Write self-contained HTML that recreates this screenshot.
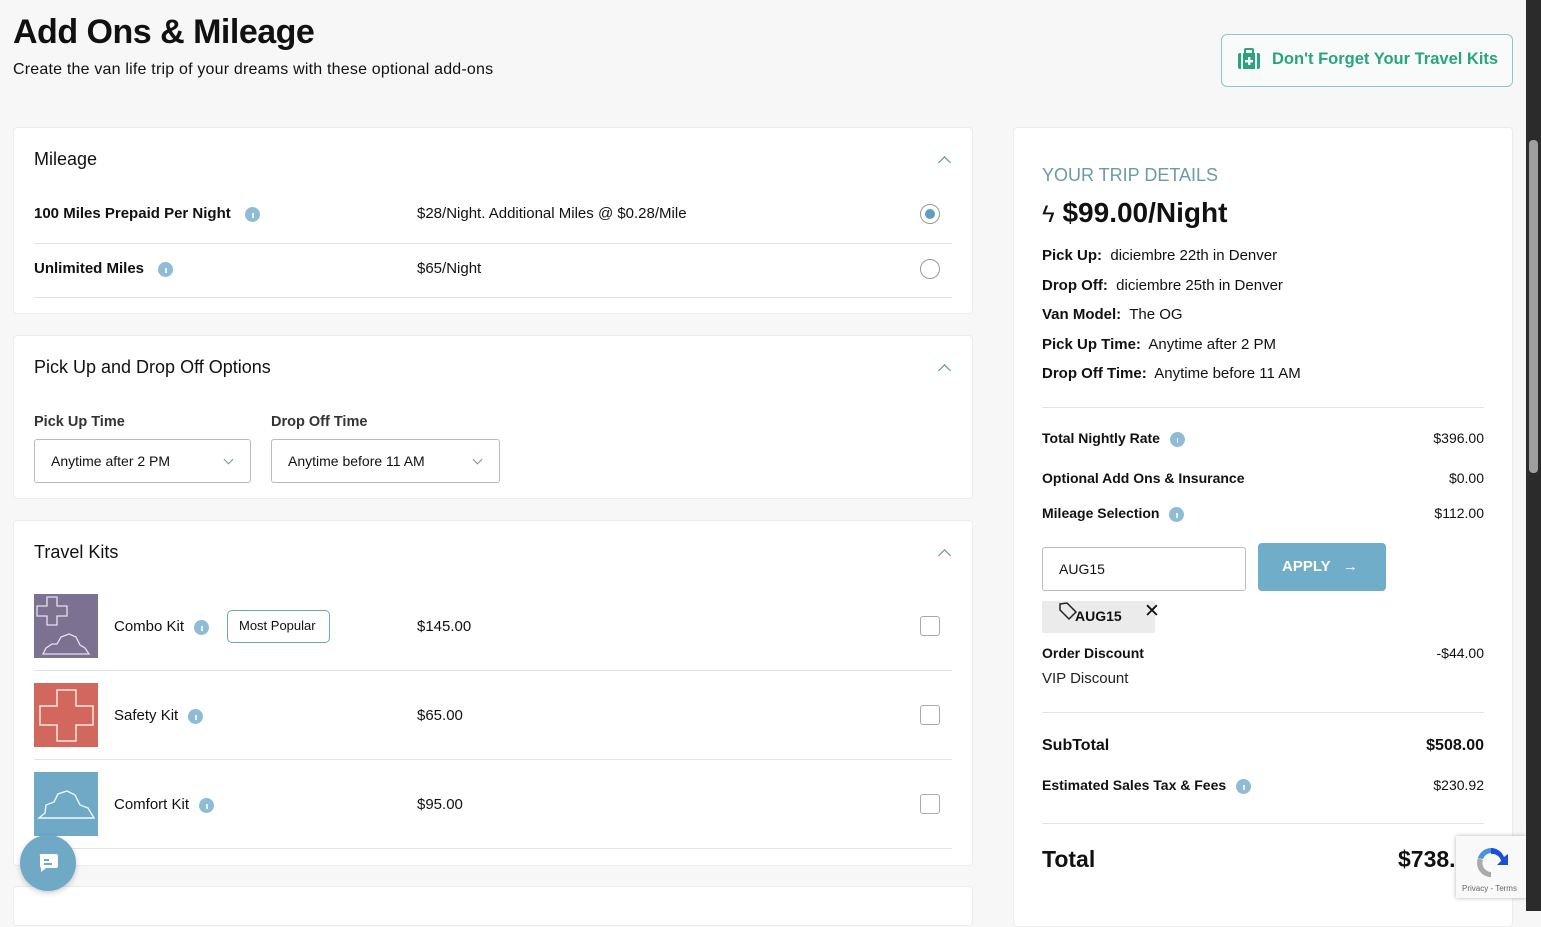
<!DOCTYPE html>
<html><head><meta charset="utf-8"><style>
*{box-sizing:border-box;margin:0;padding:0}
body{width:1541px;height:911px;overflow:hidden;background:#f7f7f7;font-family:"Liberation Sans",sans-serif;color:#111;position:relative}
.a{position:absolute;white-space:nowrap}
.card{position:absolute;background:#fff;border:1px solid #ececec;border-radius:4px}
.b{font-weight:bold}
.i{display:inline-block;width:15px;height:15px;border-radius:50%;background:#8fbcd4;vertical-align:middle;position:relative;margin-left:6px}
.i:after{content:"";position:absolute;left:7px;top:6px;width:1.5px;height:5px;background:#e8f2f7}
.hr{position:absolute;height:1px;background:#e3e3e3}
.chev{position:absolute;width:9px;height:9px;border-left:1.5px solid #4e8f93;border-top:1.5px solid #4e8f93;transform:rotate(45deg)}
.cb{position:absolute;width:20px;height:20px;border:1px solid #aaa;border-radius:3px;background:#fff}
.sel{position:absolute;border:1px solid #bbb;border-radius:3px;height:44px;font-size:14px;padding:13px 16px;background:#fff}
.sel:after{content:"";position:absolute;right:18px;top:16px;width:6px;height:6px;border-right:1px solid #6a9aa8;border-bottom:1px solid #6a9aa8;transform:rotate(45deg)}
.row{font-size:15px}
</style></head><body>
<div class="a b" style="left:13px;top:13px;font-size:34px;letter-spacing:-0.5px">Add Ons &amp; Mileage</div>
<div class="a" style="left:13px;top:61px;font-size:16px;letter-spacing:0.2px">Create the van life trip of your dreams with these optional add-ons</div>
<div class="a" style="left:1221px;top:34px;width:292px;height:53px;border:1px solid #8fc5c7;border-radius:6px;background:#f9fbfb"></div>
<svg class="a" style="left:1237px;top:48px" width="24" height="22" viewBox="0 0 24 22"><rect x="1" y="5" width="22" height="16" rx="2" fill="#2aa57a"/><rect x="8" y="1" width="8" height="5" rx="1" fill="none" stroke="#2aa57a" stroke-width="2"/><rect x="4" y="5" width="2" height="16" fill="#fff"/><rect x="18" y="5" width="2" height="16" fill="#fff"/><rect x="11" y="9" width="2.4" height="8" fill="#fff"/><rect x="8" y="12" width="8" height="2.4" fill="#fff"/></svg>
<div class="a b" style="left:1272px;top:50px;font-size:16.5px;color:#2aa57a">Don't Forget Your Travel Kits</div>

<!-- Mileage -->
<div class="card" style="left:13px;top:127px;width:960px;height:187px"></div>
<div class="a" style="left:34px;top:149px;font-size:18px">Mileage</div>
<div class="chev" style="left:940px;top:158px"></div>
<div class="a b row" style="left:34px;top:205px">100 Miles Prepaid Per Night &nbsp;<span class="i"></span></div>
<div class="a row" style="left:417px;top:205px">$28/Night. Additional Miles @ $0.28/Mile</div>
<div class="a" style="left:920px;top:204px;width:20px;height:20px;border:1px solid #999;border-radius:50%"><div style="margin:4px;width:10px;height:10px;border-radius:50%;background:#5f9ec0"></div></div>
<div class="hr" style="left:34px;top:243px;width:918px"></div>
<div class="a b row" style="left:34px;top:260px">Unlimited Miles &nbsp;<span class="i"></span></div>
<div class="a row" style="left:417px;top:260px">$65/Night</div>
<div class="a" style="left:920px;top:259px;width:20px;height:20px;border:1px solid #999;border-radius:50%"></div>
<div class="hr" style="left:34px;top:297px;width:918px"></div>

<!-- Pick up -->
<div class="card" style="left:13px;top:335px;width:960px;height:164px"></div>
<div class="a" style="left:34px;top:357px;font-size:18px">Pick Up and Drop Off Options</div>
<div class="chev" style="left:940px;top:366px"></div>
<div class="a b" style="left:34px;top:414px;font-size:14.5px;color:#333">Pick Up Time</div>
<div class="a b" style="left:271px;top:414px;font-size:14.5px;color:#333">Drop Off Time</div>
<div class="sel" style="left:34px;top:439px;width:217px">Anytime after 2 PM</div>
<div class="sel" style="left:271px;top:439px;width:229px">Anytime before 11 AM</div>

<!-- Travel kits -->
<div class="card" style="left:13px;top:520px;width:960px;height:346px"></div>
<div class="a" style="left:34px;top:542px;font-size:18px">Travel Kits</div>
<div class="chev" style="left:940px;top:551px"></div>

<svg class="a" style="left:34px;top:594px" width="64" height="64"><rect width="64" height="64" fill="#7c7190"/><path d="M13 3h10v9h10v10h-10v9h-10v-9h-10v-10h10z" fill="none" stroke="#e8e0f0" stroke-width="1.3"/><path d="M9 60l3-6 6-4 5 0 4-7 8-3 7 3 4 8 5 3 4 6z" fill="none" stroke="#e8e0f0" stroke-width="1.3"/></svg>
<div class="a row" style="left:114px;top:618px">Combo Kit <span class="i"></span></div>
<div class="a" style="left:227px;top:610px;width:103px;height:33px;border:1px solid #6aa9b0;border-radius:5px;font-size:13px;padding:7px 11px">Most Popular</div>
<div class="a row" style="left:417px;top:618px">$145.00</div>
<div class="cb" style="left:920px;top:616px"></div>
<div class="hr" style="left:34px;top:670px;width:918px"></div>

<svg class="a" style="left:34px;top:683px" width="64" height="64"><rect width="64" height="64" fill="#d2675d"/><path d="M23 7h19v16h17v19h-17v16h-19v-16h-17v-19h17z" fill="none" stroke="#fbe6df" stroke-width="1.5"/></svg>
<div class="a row" style="left:114px;top:707px">Safety Kit <span class="i"></span></div>
<div class="a row" style="left:417px;top:707px">$65.00</div>
<div class="cb" style="left:920px;top:705px"></div>
<div class="hr" style="left:34px;top:759px;width:918px"></div>

<svg class="a" style="left:34px;top:772px" width="64" height="64"><rect width="64" height="64" fill="#6fa9c6"/><path d="M5 46l6-5 1-8 8-3 4-8 9-3 8 4 5 10 8 3 6 10z" fill="none" stroke="#eef7fb" stroke-width="1.4"/></svg>
<div class="a row" style="left:114px;top:796px">Comfort Kit <span class="i"></span></div>
<div class="a row" style="left:417px;top:796px">$95.00</div>
<div class="cb" style="left:920px;top:794px"></div>
<div class="hr" style="left:34px;top:848px;width:918px"></div>
<div class="card" style="left:13px;top:886px;width:960px;height:40px"></div>

<div class="a" style="left:20px;top:835px;width:56px;height:56px;border-radius:50%;background:#6fa9c6;box-shadow:0 2px 6px rgba(0,0,0,.2)"></div>
<svg class="a" style="left:36px;top:851px" width="24" height="24"><path d="M4 3h16a2 2 0 0 1 2 2v10a2 2 0 0 1-2 2h-10l-5 4v-4a2 2 0 0 1-1-2v-10a2 2 0 0 1 0-2z" fill="#fff"/><rect x="8" y="8" width="5" height="2" fill="#6fa9c6"/><rect x="8" y="12" width="8" height="2" fill="#6fa9c6"/></svg>

<!-- Right panel -->
<div class="card" style="left:1013px;top:127px;width:500px;height:800px"></div>
<div class="a" style="left:1042px;top:165px;font-size:18px;color:#6b9aa8">YOUR TRIP DETAILS</div>
<div class="a b" style="left:1042px;top:197px;font-size:28px"><span style="font-weight:normal;font-size:24px">ϟ</span> $99.00/Night</div>
<div class="a" style="left:1042px;top:241px;font-size:15px;line-height:29.5px"><b>Pick Up:</b>&nbsp; diciembre 22th in Denver<br><b>Drop Off:</b>&nbsp; diciembre 25th in Denver<br><b>Van Model:</b>&nbsp; The OG<br><b>Pick Up Time:</b>&nbsp; Anytime after 2 PM<br><b>Drop Off Time:</b>&nbsp; Anytime before 11 AM</div>
<div class="hr" style="left:1042px;top:407px;width:442px"></div>
<div class="a b" style="left:1042px;top:430px;font-size:14px">Total Nightly Rate <span class="i"></span></div>
<div class="a" style="right:57px;top:430px;font-size:14px">$396.00</div>
<div class="a b" style="left:1042px;top:470px;font-size:14px">Optional Add Ons &amp; Insurance</div>
<div class="a" style="right:57px;top:470px;font-size:14px">$0.00</div>
<div class="a b" style="left:1042px;top:505px;font-size:14px">Mileage Selection <span class="i"></span></div>
<div class="a" style="right:57px;top:505px;font-size:14px">$112.00</div>
<div class="a" style="left:1042px;top:547px;width:204px;height:44px;border:1px solid #bbb;border-radius:3px;font-size:14px;padding:13px 16px">AUG15</div>
<div class="a b" style="left:1258px;top:543px;width:128px;height:48px;background:#6fadc9;border-radius:4px;color:#fff;font-size:15px;padding:15px 24px">APPLY &nbsp;&nbsp;→</div>
<div class="a" style="left:1042px;top:601px;width:113px;height:32px;background:#ebebeb;border-radius:2px"></div>
<svg class="a" style="left:1058px;top:601px" width="20" height="20"><path d="M2 3l7-1 9 9-7 7-9-9z" fill="none" stroke="#222" stroke-width="1.5"/></svg>
<div class="a b" style="left:1075px;top:608px;font-size:14px">AUG15</div>
<div class="a" style="left:1144px;top:600px;font-size:19px">✕</div>
<div class="a b" style="left:1042px;top:645px;font-size:14px">Order Discount</div>
<div class="a" style="right:57px;top:645px;font-size:14px">-$44.00</div>
<div class="a" style="left:1042px;top:670px;font-size:15px;color:#222">VIP Discount</div>
<div class="hr" style="left:1042px;top:712px;width:442px"></div>
<div class="a b" style="left:1042px;top:737px;font-size:16px">SubTotal</div>
<div class="a b" style="right:57px;top:737px;font-size:16px">$508.00</div>
<div class="a b" style="left:1042px;top:777px;font-size:14px">Estimated Sales Tax &amp; Fees <span class="i"></span></div>
<div class="a" style="right:57px;top:777px;font-size:14px">$230.92</div>
<div class="hr" style="left:1042px;top:823px;width:442px"></div>
<div class="a b" style="left:1042px;top:846px;font-size:23px">Total</div>
<div class="a b" style="left:1398px;top:846px;font-size:23px">$738.</div>
<div class="a" style="left:1456px;top:836px;width:70px;height:62px;background:#f9f9f9;box-shadow:0 0 4px rgba(0,0,0,.3)"></div>
<svg class="a" style="left:1472px;top:843px" width="38" height="38"><path d="M19 5a14 14 0 0 1 13 9l4-3v11h-11l4-4a9 9 0 0 0-10-7z" fill="#1c4fd6"/><path d="M19 5a14 14 0 0 0-13 10l5 1a9 9 0 0 1 8-6z" fill="#4a90e2"/><path d="M6 15a14 14 0 0 0 13 19v-5a9 9 0 0 1-8-12z" fill="#aaa"/></svg>
<div class="a" style="left:1462px;top:884px;font-size:8px;color:#666">Privacy - Terms</div>

<!-- scrollbar -->
<div class="a" style="left:1526px;top:0;width:15px;height:911px;background:#2b2b2b"></div>
<div class="a" style="left:1529px;top:140px;width:9px;height:333px;background:#9e9e9e;border-radius:4px"></div>
</body></html>
